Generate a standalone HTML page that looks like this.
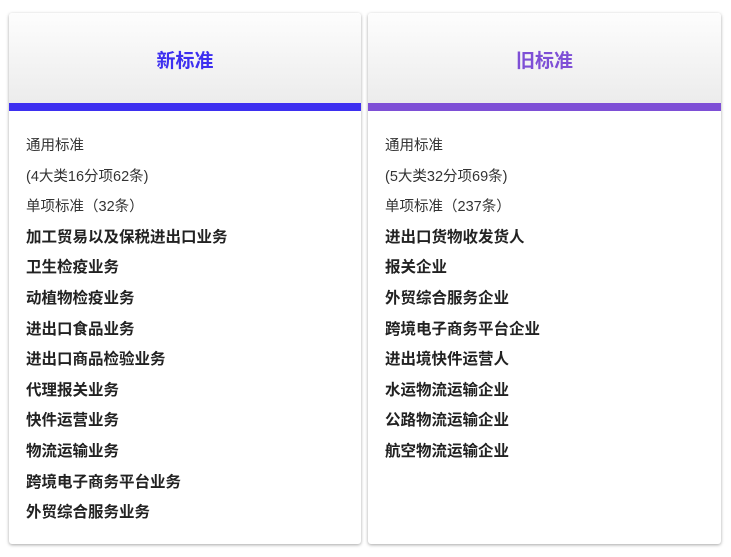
<!DOCTYPE html>
<html><head><meta charset="utf-8"><style>
body{margin:0;background:#fff;font-family:"Liberation Sans","Noto Sans CJK SC",sans-serif;}
.card{position:absolute;top:13px;height:531px;background:#fff;border-radius:3px;box-shadow:0 1px 3px rgba(0,0,0,.35);overflow:hidden}
.hd{height:90px;background:linear-gradient(#fdfdfd,#ececec);text-align:center;line-height:98px;font-size:19px;font-weight:bold}
.bar{height:8px}
ul{list-style:none;margin:0;padding:20px 0 0 17px}
li{height:30.6px;line-height:30.6px;font-size:14.5px;color:#333}
li.b{font-weight:bold;font-size:15.5px;color:#222}
</style></head><body>
<div class="card" style="left:9px;width:352px">
<div class="hd" style="color:#3d2ff0">新标准</div><div class="bar" style="background:#3d2ff0"></div>
<ul><li>通用标准</li><li>(4大类16分项62条)</li><li>单项标准（32条）</li>
<li class="b">加工贸易以及保税进出口业务</li><li class="b">卫生检疫业务</li><li class="b">动植物检疫业务</li><li class="b">进出口食品业务</li><li class="b">进出口商品检验业务</li><li class="b">代理报关业务</li><li class="b">快件运营业务</li><li class="b">物流运输业务</li><li class="b">跨境电子商务平台业务</li><li class="b">外贸综合服务业务</li></ul></div>
<div class="card" style="left:368px;width:353px">
<div class="hd" style="color:#7e4fd6">旧标准</div><div class="bar" style="background:#7e4fd6"></div>
<ul><li>通用标准</li><li>(5大类32分项69条)</li><li>单项标准（237条）</li>
<li class="b">进出口货物收发货人</li><li class="b">报关企业</li><li class="b">外贸综合服务企业</li><li class="b">跨境电子商务平台企业</li><li class="b">进出境快件运营人</li><li class="b">水运物流运输企业</li><li class="b">公路物流运输企业</li><li class="b">航空物流运输企业</li></ul></div>
</body></html>
